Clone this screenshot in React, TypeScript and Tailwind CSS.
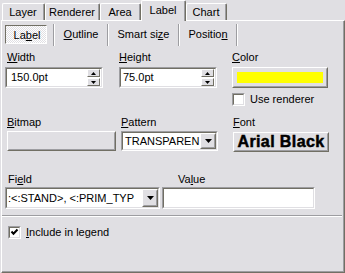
import React from 'react';

function Sunken({ className = '', children }: { className?: string; children?: React.ReactNode }) {
  return (
    <div className={`border border-t-[#9D9DA1] border-l-[#9D9DA1] border-r-white border-b-white ${className}`}>
      <div className="w-full h-full border border-t-[#716F64] border-l-[#716F64] border-r-[#E0DFE3] border-b-[#E0DFE3] bg-white flex items-center overflow-hidden">
        {children}
      </div>
    </div>
  );
}

function Raised({ className = '', innerClass = '', children }: { className?: string; innerClass?: string; children?: React.ReactNode }) {
  return (
    <div className={`border border-t-white border-l-white border-r-[#716F64] border-b-[#716F64] bg-[#E0DFE3] ${className}`}>
      <div className={`w-full h-full border border-t-[#E0DFE3] border-l-[#E0DFE3] border-r-[#9D9DA1] border-b-[#9D9DA1] flex items-center justify-center ${innerClass}`}>
        {children}
      </div>
    </div>
  );
}

function DownArrow({ w = 7 }: { w?: number }) {
  const h = Math.ceil(w / 2);
  return (
    <svg width={w} height={h} viewBox={`0 0 ${w} ${h}`} className="block">
      <polygon points={`0,0 ${w},0 ${w / 2},${h}`} fill="#000" />
    </svg>
  );
}

function UpArrow({ w = 5 }: { w?: number }) {
  const h = Math.ceil(w / 2);
  return (
    <svg width={w} height={h} viewBox={`0 0 ${w} ${h}`} className="block">
      <polygon points={`0,${h} ${w},${h} ${w / 2},0`} fill="#000" />
    </svg>
  );
}

function CheckBox({ checked }: { checked?: boolean }) {
  return (
    <div className="w-[13px] h-[13px] border border-t-[#9D9DA1] border-l-[#9D9DA1] border-r-white border-b-white shrink-0">
      <div className="w-full h-full border border-t-[#716F64] border-l-[#716F64] border-r-[#E0DFE3] border-b-[#E0DFE3] bg-white flex items-center justify-center">
        {checked && (
          <svg width="9" height="9" viewBox="0 0 9 9" className="block">
            <polyline points="1.5,3.5 3.5,5.8 7.5,1.5" fill="none" stroke="#000" strokeWidth="2" />
          </svg>
        )}
      </div>
    </div>
  );
}

function Tab({ w, selected, children }: { w: string; selected?: boolean; children: React.ReactNode }) {
  if (selected) {
    return (
      <div className={`${w} h-[21px] -mb-[1px] bg-[#E0DFE3] border-l border-t border-r border-l-white border-t-white border-r-[#716F64] rounded-tl-[2px] rounded-tr-[2px]`}>
        <div className="w-full h-full border-r border-r-[#9D9DA1] flex justify-center pt-[3px]">{children}</div>
      </div>
    );
  }
  return (
    <div className={`${w} h-[17px] bg-[#E0DFE3] border-l border-t border-r border-l-white border-t-white border-r-[#716F64] rounded-tl-[2px] rounded-tr-[2px]`}>
      <div className="w-full h-full border-r border-r-[#9D9DA1] flex justify-center pt-[2px]">{children}</div>
    </div>
  );
}

function Sep() {
  return <div className="w-[2px] h-[22px] border-l border-r border-l-[#9D9DA1] border-r-white shrink-0" />;
}

export default function App() {
  return (
    <div className="w-[345px] h-[273px] bg-[#E0DFE3] overflow-hidden text-[11px] leading-[13px] text-black [font-family:'Liberation_Sans',Arial,sans-serif]">
      <div className="flex items-end h-[20px] pl-[2px] relative z-10">
        <Tab w="w-[43px]">Layer</Tab>
        <Tab w="w-[55px]">Renderer</Tab>
        <Tab w="w-[41px]">Area</Tab>
        <Tab w="w-[45px]" selected>Label</Tab>
        <Tab w="w-[41px]">Chart</Tab>
      </div>
      <div className="ml-[1px] w-[344px] h-[253px] border-l border-t border-r border-b border-l-white border-t-white border-r-[#716F64] border-b-[#716F64]">
        <div className="w-full h-full border-r border-b border-r-[#9D9DA1] border-b-[#9D9DA1] flex flex-col">
          {/* sub tabs */}
          <div className="flex items-center h-[19px] mt-[4px] pl-[3px]">
            <div className="w-[42px] h-[19px] shrink-0 border border-t-[#716F64] border-l-[#716F64] border-r-white border-b-white bg-[repeating-conic-gradient(#ffffff_0_25%,#E0DFE3_0_50%)] bg-[length:2px_2px] flex items-center justify-center pt-[1px] pl-[2px]">
              <span>La<u>b</u>el</span>
            </div>
            <div className="ml-[6px]"><Sep /></div>
            <div className="w-[52px] text-center shrink-0"><u>O</u>utline</div>
            <Sep />
            <div className="w-[69px] text-center shrink-0">Smart si<u>z</u>e</div>
            <Sep />
            <div className="w-[56px] text-center shrink-0">Positio<u>n</u></div>
            <Sep />
          </div>

          {/* section 1 */}
          <div className="flex mt-[7px]">
            <div className="ml-[3px] w-[98px] flex flex-col">
              <div className="pl-[2px] h-[13px]"><u>W</u>idth</div>
              <Sunken className="mt-[3px] h-[21px]">
                <span className="flex-1 pl-[4px]">150.0pt</span>
                <div className="w-[13px] h-full flex flex-col justify-center gap-[1px] mr-[1px]">
                  <Raised className="h-[8px] w-[13px] border-t-[#E0DFE3] border-l-[#E0DFE3]" innerClass="border-0"><UpArrow /></Raised>
                  <Raised className="h-[8px] w-[13px] border-t-[#E0DFE3] border-l-[#E0DFE3]" innerClass="border-0"><DownArrow w={5} /></Raised>
                </div>
              </Sunken>
            </div>
            <div className="ml-[16px] w-[98px] flex flex-col">
              <div className="h-[13px]"><u>H</u>eight</div>
              <Sunken className="mt-[3px] h-[21px]">
                <span className="flex-1 pl-[2px]">75.0pt</span>
                <div className="w-[13px] h-full flex flex-col justify-center gap-[1px] mr-[1px]">
                  <Raised className="h-[8px] w-[13px] border-t-[#E0DFE3] border-l-[#E0DFE3]" innerClass="border-0"><UpArrow /></Raised>
                  <Raised className="h-[8px] w-[13px] border-t-[#E0DFE3] border-l-[#E0DFE3]" innerClass="border-0"><DownArrow w={5} /></Raised>
                </div>
              </Sunken>
            </div>
            <div className="ml-[15px] w-[96px] flex flex-col">
              <div className="h-[13px]"><u>C</u>olor</div>
              <Raised className="mt-[3px] h-[21px] w-[96px]">
                <div className="w-[86px] h-[11px] bg-[#FFFF00]" />
              </Raised>
              <div className="flex items-center mt-[5px] h-[13px]">
                <CheckBox />
                <span className="ml-[5px]">Use renderer</span>
              </div>
            </div>
          </div>

          {/* section 2 */}
          <div className="flex mt-[10px]">
            <div className="ml-[3px] w-[114px] flex flex-col">
              <div className="pl-[2px] h-[13px]"><u>B</u>itmap</div>
              <Raised className="mt-[2px] ml-[2px] h-[20px] w-[109px]" />
            </div>
            <div className="ml-[2px] w-[97px] flex flex-col">
              <div className="h-[13px]"><u>P</u>attern</div>
              <Sunken className="mt-[2px] h-[20px]">
                <span className="flex-1 pl-[2px] overflow-hidden whitespace-nowrap">TRANSPAREN</span>
                <Raised className="w-[16px] h-[16px] shrink-0"><DownArrow /></Raised>
              </Sunken>
            </div>
            <div className="ml-[15px] w-[96px] flex flex-col">
              <div className="h-[13px]"><u>F</u>ont</div>
              <Raised className="mt-[3px] h-[20px] w-[96px]">
                <span className="text-[16px] leading-[16px] font-black tracking-[0.4px] [-webkit-text-stroke:0.5px_#000] whitespace-nowrap">Arial Black</span>
              </Raised>
            </div>
          </div>

          {/* section 3 */}
          <div className="flex mt-[21px]">
            <div className="ml-[3px] w-[155px] flex flex-col">
              <div className="pl-[3px] h-[13px]">Fi<u>e</u>ld</div>
              <Sunken className="mt-[1px] h-[22px]">
                <span className="flex-1 pl-[1px] overflow-hidden whitespace-nowrap">:&lt;:STAND&gt;, &lt;:PRIM_TYP</span>
                <Raised className="w-[16px] h-[18px] shrink-0"><DownArrow /></Raised>
              </Sunken>
            </div>
            <div className="ml-[2px] w-[153px] flex flex-col">
              <div className="pl-[16px] h-[13px]">Va<u>l</u>ue</div>
              <Sunken className="mt-[1px] h-[22px]" />
            </div>
          </div>

          <div className="mt-[6px] h-[2px] mr-[1px] border-t border-b border-t-[#9D9DA1] border-b-white" />

          <div className="flex items-center mt-[9px] ml-[6px] h-[13px]">
            <CheckBox checked />
            <span className="ml-[5px]"><u>I</u>nclude in legend</span>
          </div>
        </div>
      </div>
    </div>
  );
}
